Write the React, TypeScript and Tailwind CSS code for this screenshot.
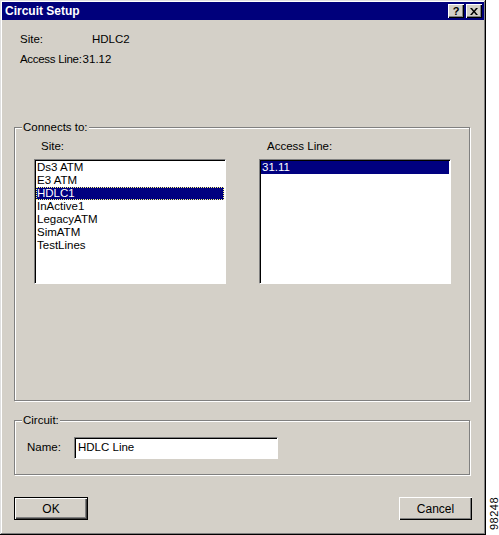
import React from "react";

const sites = ["Ds3 ATM", "E3 ATM", "HDLC1", "InActive1", "LegacyATM", "SimATM", "TestLines"];
const lines = ["31.11"];

function ListBox({ items, selected, focus }: { items: string[]; selected: number; focus?: boolean }) {
  return (
    <div className="w-[192px] h-[125px] bg-white border border-t-[#808080] border-l-[#808080] border-r-[#ffffff] border-b-[#ffffff] shadow-[inset_1px_1px_0_#000] p-[1px] overflow-hidden">
      {items.map((it, i) => (
        <div
          key={it}
          className={
            i === selected
              ? "h-[13px] leading-[13px] pl-[1px] bg-[#000080] text-white" +
                (focus ? " outline outline-1 outline-dotted outline-[#ffff80] -outline-offset-1" : "")
              : "h-[13px] leading-[13px] pl-[1px] text-black"
          }
        >
          {it}
        </div>
      ))}
    </div>
  );
}

function Button({ label, isDefault }: { label: string; isDefault?: boolean }) {
  return (
    <button
      className={
        "h-[23px] flex items-center justify-center bg-[#d4d0c8] text-[12px] text-black " +
        (isDefault
          ? "w-[74px] border border-black shadow-[inset_1px_1px_0_#fff,inset_-1px_-1px_0_#404040,inset_-2px_-2px_0_#808080]"
          : "w-[73px] shadow-[inset_1px_1px_0_#fff,inset_-1px_-1px_0_#000,inset_-2px_-2px_0_#808080]")
      }
    >
      {label}
    </button>
  );
}

function TitleButton({ children }: { children: React.ReactNode }) {
  return (
    <div className="w-[16px] h-[14px] bg-[#d4d0c8] flex items-center justify-center text-[11px] font-bold text-black leading-none shadow-[inset_1px_1px_0_#fff,inset_-1px_-1px_0_#000,inset_-2px_-2px_0_#808080]">
      {children}
    </div>
  );
}

export default function App() {
  return (
    <div
      className="flex w-[499px] h-[535px] bg-white text-[11.5px] text-black"
      style={{ fontFamily: '"Liberation Sans", Arial, sans-serif' }}
    >
      <div className="w-[486px] shrink-0 h-[535px] bg-[#d4d0c8] p-[2px] flex flex-col shadow-[inset_-1px_-1px_0_#000,inset_1px_1px_0_#dfdfdf,inset_-2px_-2px_0_#808080,inset_2px_2px_0_#fff]">
        <div className="h-[18px] bg-[#00007b] flex items-center justify-between pl-[3px] pr-[2px]">
          <span className="text-white font-bold text-[12px]">Circuit Setup</span>
          <div className="flex gap-[2px]">
            <TitleButton>?</TitleButton>
            <TitleButton>
              <svg width="8" height="7" viewBox="0 0 8 7">
                <path d="M0 0h2l2 2.5L6 0h2L5 3.5 8 7H6L4 4.5 2 7H0l3-3.5z" fill="#000" />
              </svg>
            </TitleButton>
          </div>
        </div>

        <div className="pt-[12px] pl-[18px] whitespace-nowrap">
          <div className="flex h-[16px] items-center">
            <span className="w-[72px] shrink-0">Site:</span>
            <span>HDLC2</span>
          </div>
          <div className="flex h-[20px] items-center mt-[2px]">
            <span className="shrink-0 tracking-[-0.3px]">Access Line:</span>
            <span className="ml-[1px]">31.12</span>
          </div>
        </div>

        <fieldset className="mt-[50px] ml-[12px] w-[456px] h-[281px] border border-[#808080] shadow-[inset_1px_1px_0_#fff,1px_1px_0_#fff]">
          <legend className="ml-[7px] px-[1px] leading-[14px] bg-[#d4d0c8]">Connects to:</legend>
          <div className="flex pl-[19px] pt-[5px] gap-[33px]">
            <div className="flex flex-col">
              <span className="ml-[7px] h-[14px] leading-[14px] mb-[6px]">Site:</span>
              <ListBox items={sites} selected={2} focus />
            </div>
            <div className="flex flex-col">
              <span className="ml-[8px] h-[14px] leading-[14px] mb-[6px]">Access Line:</span>
              <ListBox items={lines} selected={0} />
            </div>
          </div>
        </fieldset>

        <fieldset className="mt-[12px] ml-[12px] w-[456px] h-[62px] border border-[#808080] shadow-[inset_1px_1px_0_#fff,1px_1px_0_#fff]">
          <legend className="ml-[7px] px-[1px] leading-[14px] bg-[#d4d0c8]">Circuit:</legend>
          <div className="flex items-center pl-[12px] pt-[10px]">
            <span className="w-[47px]">Name:</span>
            <div className="w-[204px] h-[22px] bg-white border border-t-[#808080] border-l-[#808080] border-r-[#ffffff] border-b-[#ffffff] shadow-[inset_1px_1px_0_#000] pl-[3px] flex items-center">
              HDLC Line
            </div>
          </div>
        </fieldset>

        <div className="flex justify-between mt-[22px] pl-[12px] pr-[12px]">
          <Button label="OK" isDefault />
          <Button label="Cancel" />
        </div>
      </div>
      <div className="flex-1 flex items-end justify-center pb-[5px]">
        <span className="text-[11px] [writing-mode:vertical-rl] rotate-180 tracking-[0.5px]">98248</span>
      </div>
    </div>
  );
}
